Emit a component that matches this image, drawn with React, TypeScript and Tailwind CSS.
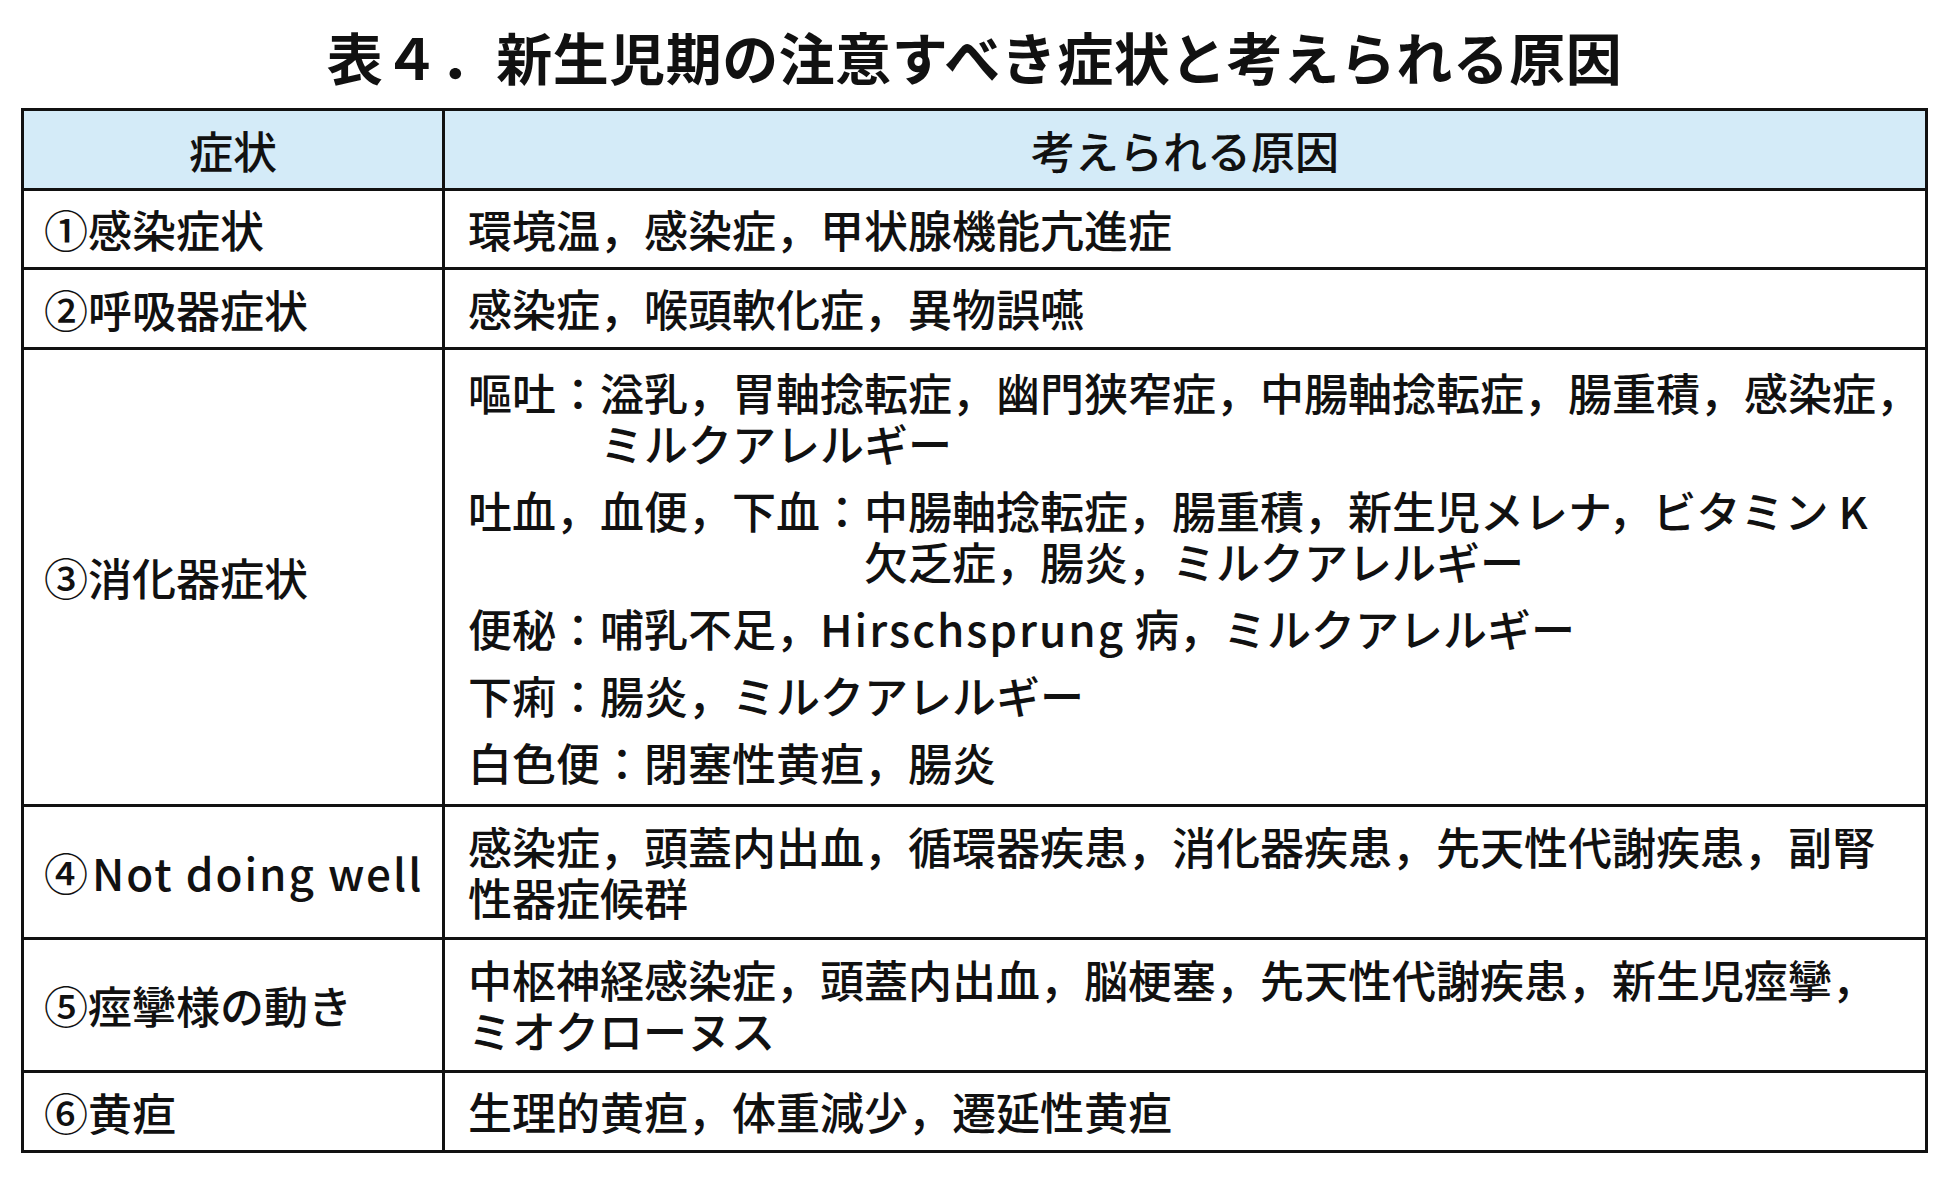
import React from "react";

const font = { fontFamily: '"Noto Sans CJK JP", "Noto Sans", sans-serif' };

function Row({
  label,
  h,
  children,
}: {
  label: React.ReactNode;
  h: string;
  children: React.ReactNode;
}) {
  return (
    <div className={`flex border-t-[3px] border-[#111] ${h}`}>
      <div className="w-[421px] shrink-0 border-r-[3px] border-[#111] flex items-center pl-[20px] whitespace-nowrap">
        {label}
      </div>
      <div className="flex-1 flex flex-col justify-center pl-[23px] whitespace-nowrap">
        {children}
      </div>
    </div>
  );
}

function L({ children }: { children: React.ReactNode }) {
  return <div className="h-[51px] leading-[51px]">{children}</div>;
}

function Item({ head, lines }: { head: string; lines: string[] }) {
  return (
    <div className="flex">
      <div className="shrink-0 h-[51px] leading-[51px]">{head}</div>
      <div className="flex flex-col">
        {lines.map((l, i) => (
          <L key={i}>{l}</L>
        ))}
      </div>
    </div>
  );
}

export default function App() {
  return (
    <div
      className="w-[1949px] h-[1181px] bg-white text-[#111] overflow-hidden"
      style={font}
    >
      <div className="h-[108px] flex items-center justify-center pt-[4px]">
        <h1 className="text-[56px] font-bold leading-none tracking-[0.5px]">
          表４．新生児期の注意すべき症状と考えられる原因
        </h1>
      </div>
      <div className="ml-[21px] w-[1907px] border-[3px] border-[#111] text-[44px] font-medium">
        <div className="flex h-[77px] bg-[#d4ebf8]">
          <div className="w-[421px] shrink-0 border-r-[3px] border-[#111] flex items-center justify-center">
            症状
          </div>
          <div className="flex-1 flex items-center justify-center">
            考えられる原因
          </div>
        </div>
        <Row label="①感染症状" h="h-[79px]">
          <L>環境温，感染症，甲状腺機能亢進症</L>
        </Row>
        <Row label="②呼吸器症状" h="h-[80px]">
          <L>感染症，喉頭軟化症，異物誤嚥</L>
        </Row>
        <Row label="③消化器症状" h="h-[457px]">
          <div className="flex flex-col gap-[16px]">
            <Item
              head="嘔吐："
              lines={[
                "溢乳，胃軸捻転症，幽門狭窄症，中腸軸捻転症，腸重積，感染症，",
                "ミルクアレルギー",
              ]}
            />
            <Item
              head="吐血，血便，下血："
              lines={[
                "中腸軸捻転症，腸重積，新生児メレナ，ビタミン K",
                "欠乏症，腸炎，ミルクアレルギー",
              ]}
            />
            <L>
              便秘：哺乳不足，<span className="tracking-[2px]">Hirschsprung</span> 病，ミルクアレルギー
            </L>
            <L>下痢：腸炎，ミルクアレルギー</L>
            <L>白色便：閉塞性黄疸，腸炎</L>
          </div>
        </Row>
        <Row
          label={
            <span>
              ④<span className="ml-[4px] tracking-[2px]">Not doing well</span>
            </span>
          }
          h="h-[133px]"
        >
          <L>感染症，頭蓋内出血，循環器疾患，消化器疾患，先天性代謝疾患，副腎</L>
          <L>性器症候群</L>
        </Row>
        <Row label="⑤痙攣様の動き" h="h-[133px]">
          <L>中枢神経感染症，頭蓋内出血，脳梗塞，先天性代謝疾患，新生児痙攣，</L>
          <L>ミオクローヌス</L>
        </Row>
        <Row label="⑥黄疸" h="h-[80px]">
          <L>生理的黄疸，体重減少，遷延性黄疸</L>
        </Row>
      </div>
    </div>
  );
}
